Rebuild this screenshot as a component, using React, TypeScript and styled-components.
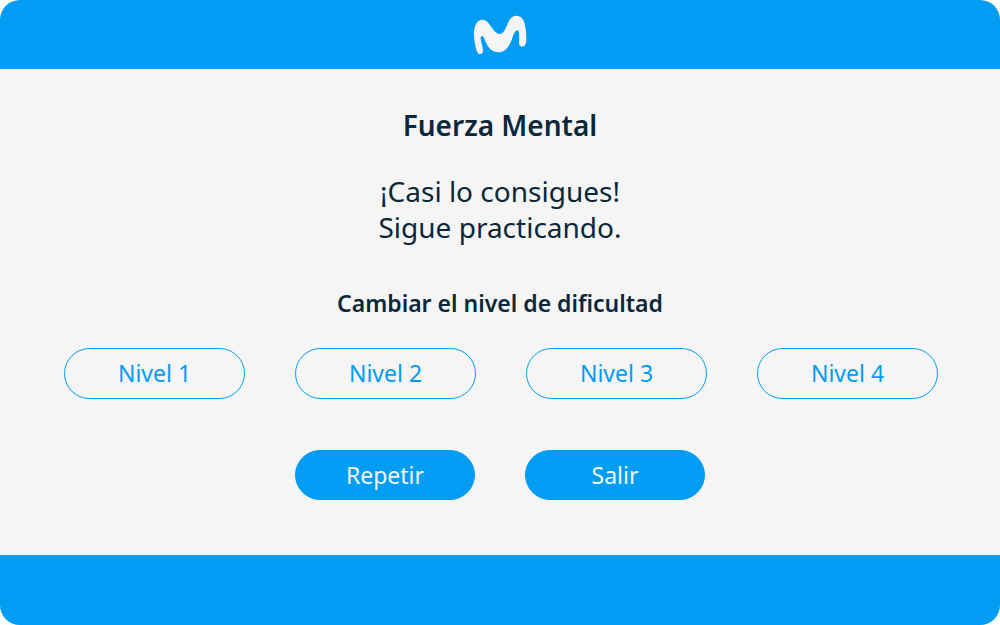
import React from "react";
import styled, { createGlobalStyle } from "styled-components";

const blue = "#019df4";
const ink = "#0b2739";
const paper = "#f5f5f5";

const GlobalStyle = createGlobalStyle`
  *, *::before, *::after { box-sizing: border-box; }
  body {
    margin: 0;
    background: #ffffff;
    color: ${ink};
    font-family: "Noto Sans", "Open Sans", sans-serif;
  }
  button { font: inherit; cursor: pointer; }
`;

const Screen = styled.div`
  display: flex;
  flex-direction: column;
  min-height: 100vh;
  overflow: hidden;
  border-radius: 20px;
  background: ${paper};
`;

const Header = styled.header`
  display: flex;
  justify-content: center;
  padding: 15px 0 14px;
  background: ${blue};
`;

const Logo = styled.svg`
  display: block;
  width: 54px;
  height: 40px;
`;

const Content = styled.main`
  flex: 1;
  display: flex;
  flex-direction: column;
  align-items: center;
  padding: 38px 0 55px;
  text-align: center;
`;

const Title = styled.h1`
  margin: 0;
  font-size: 28px;
  line-height: 36px;
  font-weight: 600;
`;

const Message = styled.p`
  margin: 30px 0 0;
  font-size: 28px;
  line-height: 36px;
`;

const Subtitle = styled.h2`
  margin: 42px 0 0;
  font-size: 23px;
  line-height: 32px;
  font-weight: 600;
`;

const Levels = styled.div`
  display: grid;
  grid-template-columns: repeat(4, 1fr);
  gap: 50px;
  width: 100%;
  margin-top: 29px;
  padding: 0 62px 0 64px;
`;

const Actions = styled.div`
  display: flex;
  justify-content: center;
  gap: 50px;
  margin-top: 51px;
`;

const PillButton = styled.button<{ $filled?: boolean }>`
  min-width: ${(p) => (p.$filled ? "180px" : "0")};
  height: ${(p) => (p.$filled ? "50px" : "51px")};
  padding: ${(p) => (p.$filled ? "0 16px" : "0 16px 2px")};
  border: 1px solid ${blue};
  border-radius: 26px;
  background: ${(p) => (p.$filled ? blue : "transparent")};
  color: ${(p) => (p.$filled ? paper : blue)};
  font-size: 23px;
  line-height: 32px;
`;

const Footer = styled.footer`
  height: 70px;
  background: ${blue};
`;

const levels = [1, 2, 3, 4];

export default function App() {
  return (
    <>
      <GlobalStyle />
      <Screen>
        <Header>
          <Logo viewBox="24 30 162 120" role="img" aria-label="Movistar">
            <path
              fill={paper}
              d="M45 147C38 147 35 139 32 126C28 108 25 88 28 74C31 55 39 44 52 44C65 44 73 57 83 71C91 82 97 87 105 87C114 87 120 75 126 61C132 45 140 32 154 32C169 32 177 44 180 61C184 81 185 98 183 112C182 121 178 125 172 125C165 125 162 120 162 112C163 100 164 76 157 76C150 76 146 89 141 102C132 126 121 142 100 142C82 142 71 130 64 115C59 104 56 93 51 93C44 93 48 107 50 116C52 125 54 131 54 137C54 143 51 147 45 147Z"
            />
          </Logo>
        </Header>
        <Content>
          <Title>Fuerza Mental</Title>
          <Message>
            ¡Casi lo consigues!
            <br />
            Sigue practicando.
          </Message>
          <Subtitle>Cambiar el nivel de dificultad</Subtitle>
          <Levels>
            {levels.map((level) => (
              <PillButton key={level} type="button">
                Nivel {level}
              </PillButton>
            ))}
          </Levels>
          <Actions>
            <PillButton $filled type="button">
              Repetir
            </PillButton>
            <PillButton $filled type="button">
              Salir
            </PillButton>
          </Actions>
        </Content>
        <Footer />
      </Screen>
    </>
  );
}
